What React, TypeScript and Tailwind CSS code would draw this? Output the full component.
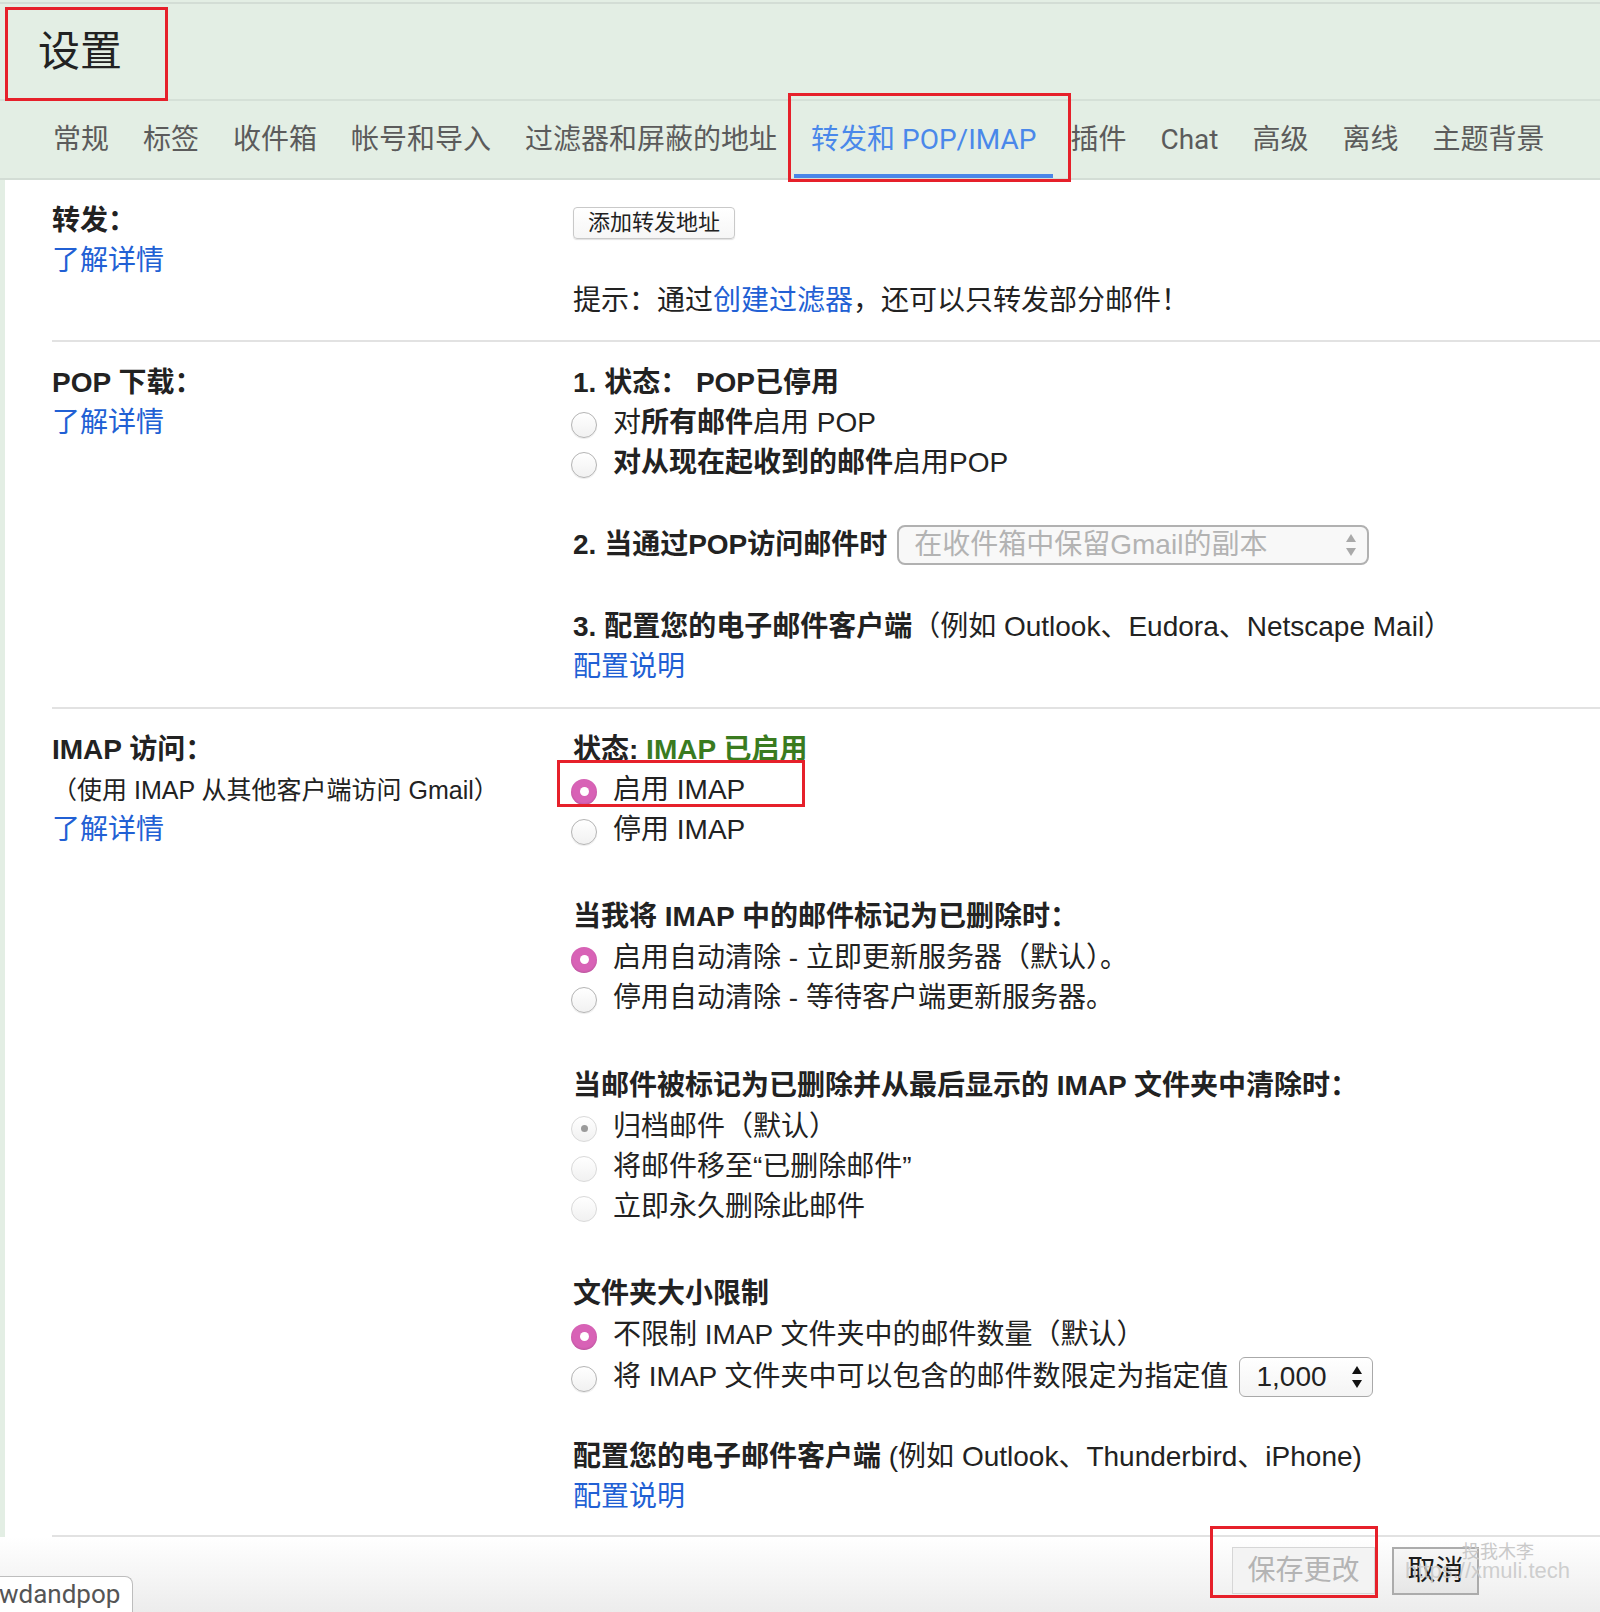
import React from "react";

const body = "font-['Liberation_Sans','Noto_Sans_CJK_SC',sans-serif]";
const tabFont = "font-['Roboto','Noto_Sans_CJK_SC',sans-serif]";

const tabs = ["常规", "标签", "收件箱", "帐号和导入", "过滤器和屏蔽的地址", "转发和 POP/IMAP", "插件", "Chat", "高级", "离线", "主题背景"];

function Radio({ checked, dim }: { checked?: boolean; dim?: boolean }) {
    if (checked) {
        return (
            <span className="w-[26px] h-[26px] -ml-[2px] mt-[3px] rounded-full bg-[#d862b6] flex items-center justify-center shrink-0 shadow-[inset_0_-1px_2px_rgba(0,0,0,0.15)]">
                <span className="w-[9px] h-[9px] rounded-full bg-white" />
            </span>
        );
    }
    return (
        <span
            className={
                "w-[26px] h-[26px] -ml-[2px] mt-[3px] rounded-full border bg-gradient-to-b from-white to-[#f1f1f1] flex items-center justify-center shrink-0 " +
                (dim ? "border-[#d9d9d9]" : "border-[#b4b4b4] shadow-[0_1px_1px_rgba(0,0,0,0.08)]")
            }
        />
    );
}

function RadioLine({ checked, dim, dot, children }: { checked?: boolean; dim?: boolean; dot?: boolean; children: React.ReactNode }) {
    return (
        <div className="flex items-center h-[40px] gap-[16px] whitespace-nowrap">
            {dot ? (
                <span className="w-[26px] h-[26px] -ml-[2px] mt-[3px] rounded-full border border-[#d9d9d9] bg-gradient-to-b from-white to-[#f1f1f1] flex items-center justify-center shrink-0">
                    <span className="w-[7px] h-[7px] rounded-full bg-[#9a9a9a]" />
                </span>
            ) : (
                <Radio checked={checked} dim={dim} />
            )}
            <span>{children}</span>
        </div>
    );
}

function Arrows({ color }: { color: string }) {
    return (
        <svg width="12" height="26" viewBox="0 0 12 26" className="shrink-0">
            <path d="M6 2 L11 10 L1 10 Z" fill={color} />
            <path d="M6 24 L11 16 L1 16 Z" fill={color} />
        </svg>
    );
}

function Link({ children }: { children: React.ReactNode }) {
    return <div className="text-[#2160d4] h-[40px]">{children}</div>;
}

export default function App() {
    return (
        <div className={`relative w-[1600px] h-[1612px] overflow-hidden bg-[#e3eee4] text-[#222] ${body}`}>
            {/* header */}
            <div className="h-[2px]" />
            <div className="h-[2px] bg-[#d3ddd5]" />
            <div className="h-[95px] flex items-center pl-[38px] text-[42px] text-[#222] leading-none">设置</div>
            <div className="h-[2px] bg-[#d5e0d7]" />
            <div className={`flex h-[77px] pl-[36px] text-[28px] text-[#5b5b5b] ${tabFont}`}>
                {tabs.map((t, i) => (
                    <div key={t} className={"relative flex items-center px-[17px] " + (i === 5 ? "text-[#4a88ea]" : "")}>
                        {t}
                        {i === 5 && <span className="absolute left-0 right-0 bottom-0 h-[4px] bg-[#4a86e8]" />}
                    </div>
                ))}
            </div>
            <div className="h-[2px] bg-[#d3ddd5]" />

            {/* content */}
            <div className="ml-[5px] bg-white text-[28px] leading-[40px]">
                {/* forwarding */}
                <div className="ml-[47px] flex pt-[21px] pb-[19px] border-b-2 border-[#e2e2e2]">
                    <div className="w-[521px] shrink-0">
                        <div className="font-bold h-[40px]">转发：</div>
                        <Link>了解详情</Link>
                    </div>
                    <div className="flex-1">
                        <div className="h-[40px] flex items-center">
                            <button className="h-[32px] mt-[4px] px-[14px] text-[22px] leading-none border border-[#c9c9c9] rounded-[4px] bg-gradient-to-b from-white to-[#f6f6f6] shadow-[0_1px_1px_rgba(0,0,0,0.12)] text-[#222]">
                                添加转发地址
                            </button>
                        </div>
                        <div className="h-[40px]" />
                        <div className="h-[40px]">
                            提示：通过<span className="text-[#2160d4]">创建过滤器</span>，还可以只转发部分邮件！
                        </div>
                    </div>
                </div>

                {/* POP */}
                <div className="ml-[47px] flex pt-[21px] pb-[20px] border-b-2 border-[#e2e2e2]">
                    <div className="w-[521px] shrink-0">
                        <div className="font-bold h-[40px]">POP 下载：</div>
                        <Link>了解详情</Link>
                    </div>
                    <div className="flex-1">
                        <div className="font-bold h-[40px]">1. 状态： POP已停用</div>
                        <RadioLine>
                            对<b>所有邮件</b>启用 POP
                        </RadioLine>
                        <RadioLine>
                            <b>对从现在起收到的邮件</b>启用POP
                        </RadioLine>
                        <div className="mt-[40px] h-[44px] flex items-center">
                            <span className="font-bold">2. 当通过POP访问邮件时</span>
                            <div className="ml-[10px] w-[472px] h-[40px] border-2 border-[#b1b1b1] rounded-[8px] bg-[#f8f8f8] flex items-center justify-between pl-[15px] pr-[10px] text-[#b3b3b3]">
                                <span>在收件箱中保留Gmail的副本</span>
                                <Arrows color="#a9a9a9" />
                            </div>
                        </div>
                        <div className="mt-[40px] h-[40px] whitespace-nowrap">
                            <b>3. 配置您的电子邮件客户端</b>（例如 Outlook、Eudora、Netscape Mail）
                        </div>
                        <Link>配置说明</Link>
                    </div>
                </div>

                {/* IMAP */}
                <div className="ml-[47px] flex pt-[21px] pb-[18px] border-b-2 border-[#e2e2e2]">
                    <div className="w-[521px] shrink-0">
                        <div className="font-bold h-[40px]">IMAP 访问：</div>
                        <div className="h-[40px] text-[25px] whitespace-nowrap">（使用 IMAP 从其他客户端访问 Gmail）</div>
                        <Link>了解详情</Link>
                    </div>
                    <div className="flex-1">
                        <div className="font-bold h-[40px]">
                            状态: <span className="text-[#3a7b1f]">IMAP 已启用</span>
                        </div>
                        <RadioLine checked>启用 IMAP</RadioLine>
                        <RadioLine>停用 IMAP</RadioLine>

                        <div className="mt-[46px] h-[42px] leading-[42px] font-bold">当我将 IMAP 中的邮件标记为已删除时：</div>
                        <RadioLine checked>启用自动清除 - 立即更新服务器（默认）。</RadioLine>
                        <RadioLine>停用自动清除 - 等待客户端更新服务器。</RadioLine>

                        <div className="mt-[47px] h-[42px] leading-[42px] font-bold whitespace-nowrap">当邮件被标记为已删除并从最后显示的 IMAP 文件夹中清除时：</div>
                        <RadioLine dot>归档邮件（默认）</RadioLine>
                        <RadioLine dim>将邮件移至“已删除邮件”</RadioLine>
                        <RadioLine dim>立即永久删除此邮件</RadioLine>

                        <div className="mt-[46px] h-[42px] leading-[42px] font-bold">文件夹大小限制</div>
                        <RadioLine checked>不限制 IMAP 文件夹中的邮件数量（默认）</RadioLine>
                        <div className="flex items-center h-[44px] gap-[16px] whitespace-nowrap">
                            <Radio />
                            <span>将 IMAP 文件夹中可以包含的邮件数限定为指定值</span>
                            <div className="-ml-[6px] w-[134px] h-[40px] border-[1.5px] border-[#a9a9a9] rounded-[6px] bg-gradient-to-b from-white to-[#f4f4f4] flex items-center justify-between pl-[17px] pr-[9px]">
                                <span>1,000</span>
                                <Arrows color="#111" />
                            </div>
                        </div>

                        <div className="mt-[38px] h-[40px] whitespace-nowrap">
                            <b>配置您的电子邮件客户端</b> (例如 Outlook、Thunderbird、iPhone)
                        </div>
                        <Link>配置说明</Link>
                    </div>
                </div>
            </div>

            {/* footer bar */}
            <div className="h-[80px] bg-gradient-to-b from-white to-[#ebebeb] flex justify-end items-start pt-[10px] pr-[121px] gap-[17px]">
                <button className="w-[143px] h-[47px] border border-[#d6d6d6] bg-[#f3f3f3] text-[28px] text-[#b4b4b4] leading-none">保存更改</button>
                <button className="w-[87px] h-[48px] border-2 border-[#ababab] bg-gradient-to-b from-[#f6f6f6] to-[#e6e6e6] text-[28px] text-[#1a1a1a] leading-none">取消</button>
            </div>

            {/* watermark */}
            <div className="absolute left-[1462px] top-[1541px] text-[18px] leading-[22px] text-[#c9c9c9] pointer-events-none">投我木李</div>
            <div className="absolute left-[1405px] top-[1559px] text-[22px] leading-[24px] text-[#c9c9c9]/90 pointer-events-none">https://xmuli.tech</div>

            {/* status bubble */}
            <div className="absolute left-0 bottom-0 w-[133px] h-[36px] bg-white border-t border-r border-[#bdbdbd] rounded-tr-[8px] overflow-hidden">
                <span className="block -ml-[1px] text-[26px] leading-[34px] text-[#555] font-['Roboto',sans-serif]">wdandpop</span>
            </div>

            {/* annotation boxes */}
            <div className="absolute left-[5px] top-[7px] w-[163px] h-[94px] border-[3px] border-[#e6202a]" />
            <div className="absolute left-[788px] top-[93px] w-[283px] h-[89px] border-[3px] border-[#e6202a]" />
            <div className="absolute left-[557px] top-[760px] w-[248px] h-[47px] border-[3px] border-[#e6202a]" />
            <div className="absolute left-[1210px] top-[1526px] w-[168px] h-[72px] border-[3px] border-[#e6202a]" />
        </div>
    );
}
